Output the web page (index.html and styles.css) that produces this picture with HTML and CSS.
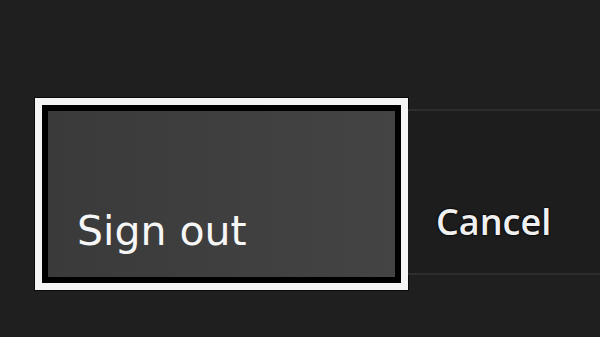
FILE: index.html
```html
<!DOCTYPE html>
<html>
<head>
<meta charset="utf-8">
<link rel="stylesheet" href="styles.css">
</head>
<body>
<div class="row">
  <div class="btn-signout"><span class="label">Sign out</span></div>
  <div class="btn-cancel"><span class="label2">Cancel</span></div>
</div>
</body>
</html>
```
FILE: styles.css
```css
html, body {
  margin: 0;
  padding: 0;
  background: #1f1f1f;
  width: 600px;
  height: 337px;
  overflow: hidden;
}
.row {
  display: flex;
  align-items: flex-start;
  padding-top: 98px;
  padding-left: 35px;
}
.btn-signout {
  box-sizing: border-box;
  flex: none;
  width: 373px;
  height: 192px;
  border: 7px solid #f4f4f4;
  box-shadow: inset 0 0 0 6px #000, 0 0 0 1px #0a0a0a;
  background: linear-gradient(to right, #3a3a3a, #444444);
  display: flex;
  align-items: flex-end;
  padding: 0 0 28px 35px;
}
.label {
  font-family: "DejaVu Sans", Verdana, sans-serif;
  font-size: 41px;
  line-height: 48px;
  color: #f6f6f6;
}
.btn-cancel {
  box-sizing: border-box;
  flex: 1;
  height: 166px;
  margin-top: 11px;
  border-top: 2px solid #2d2d2d;
  border-bottom: 2px solid #2d2d2d;
  background: #1d1d1d;
  display: flex;
  align-items: flex-end;
  padding-left: 28px;
  padding-bottom: 29px;
}
.label2 {
  font-family: "Open Sans", sans-serif;
  font-weight: 600;
  font-size: 36px;
  line-height: 44px;
  color: #f0f0f0;
  text-shadow: 0 0 2px #000, 0 0 2px #000;
}
```
